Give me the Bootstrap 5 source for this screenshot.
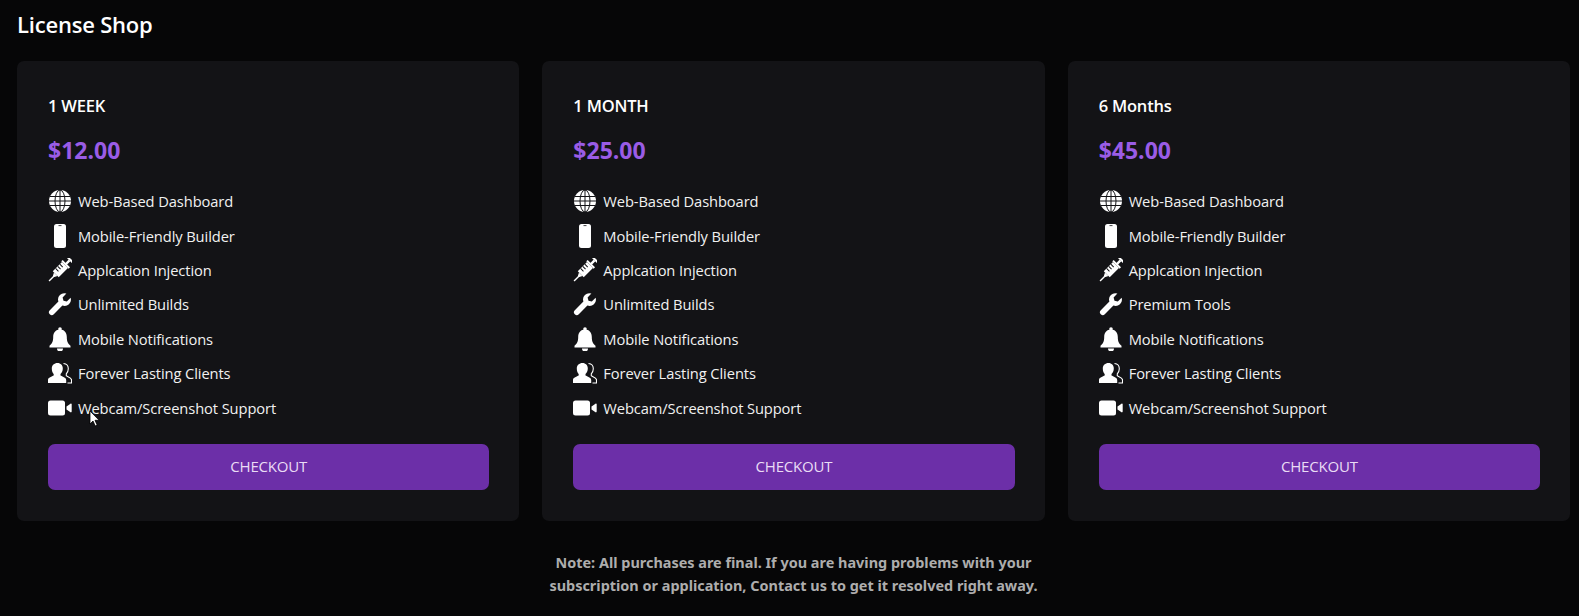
<!DOCTYPE html>
<html lang="en">
<head>
    <meta charset="UTF-8">
    <meta name="viewport" content="width=device-width, initial-scale=1.0">
    <title>License Shop</title>
    <link href="https://cdn.jsdelivr.net/npm/bootstrap@5.3.0/dist/css/bootstrap.min.css" rel="stylesheet">
    <style>
        body { background: #060607; color: #fff; font-family: "Open Sans", "Noto Sans", sans-serif; height: 616px; overflow: hidden; }
        .shop-page { padding: 10px 9px 0 17px; position: relative; }
        .shop-title { font-size: 22px; font-weight: 600; line-height: 29px; margin: 0 0 22px; letter-spacing: -.2px; }
        .plan-row { display: grid; grid-template-columns: repeat(3, 1fr); gap: 23px; }
        .plan-box { background: #131316; border: 0; border-radius: 7px; height: 460px; padding: 34px 30px 0 31px; color: #fff; }
        .plan-name { font-size: 16.5px; font-weight: 600; line-height: 22px; margin: 0 0 18px; letter-spacing: -.2px; }
        .plan-price { color: #9a5ce6; font-size: 23px; font-weight: 700; line-height: 30px; margin-bottom: 19px; }
        .feat-list { list-style: none; margin: 0; padding: 0; }
        .feat-list li { display: flex; align-items: center; gap: 6px; height: 34.4px; font-size: 14.7px; color: #f1f1f1; letter-spacing: -.1px; }
        .feat-ico { width: 24px; height: 24px; flex: none; fill: #fff; }
        .buy-btn { display: block; width: 100%; height: 46px; margin-top: 19px; background: #6c2fa8; border: 0; border-radius: 7px; color: #eadcf5; font-size: 15px; letter-spacing: -.2px; }
        .buy-btn:hover { background: #6c2fa8; color: #eadcf5; }
        .shop-note { width: 520px; margin: 30px auto 0; text-align: center; color: #adadad; font-family: "Noto Sans", sans-serif; font-size: 14.45px; font-weight: 700; line-height: 23px; }
        .mouse-arrow { position: absolute; left: 89px; top: 410px; width: 12px; height: 18px; }
    </style>
</head>
<body>
<svg class="d-none">
    <symbol id="i-globe" viewBox="0 0 24 24">
        <circle cx="12" cy="12" r="11" fill="#fff"/>
        <g fill="none" stroke="#131316" stroke-width="1">
            <ellipse cx="12" cy="12" rx="5" ry="11"/>
            <path d="M12 1v22M2 7.500h20M1 12h22M2 16.500h20"/>
        </g>
    </symbol>
    <symbol id="i-phone" viewBox="0 0 24 24">
        <path d="M8.500 0h7A2.500 2.500 0 0 1 18 2.500v19a2.500 2.500 0 0 1-2.500 2.500h-7A2.500 2.500 0 0 1 6 21.500v-19A2.500 2.500 0 0 1 8.500 0z"/>
        <path d="M10.500 1.600h3" stroke="#131316" stroke-width=".8"/>
    </symbol>
    <symbol id="i-syringe" viewBox="0 0 24 24">
        <g transform="rotate(45 12 12)">
            <rect x="8.500" y="-3.500" width="7" height="2.200"/>
            <rect x="10.800" y="-1.500" width="2.400" height="5"/>
            <rect x="6.800" y="3" width="10.400" height="2"/>
            <rect x="7.800" y="5" width="8.400" height="13"/>
            <path d="M9.500 18h5L13 21h-2z"/>
            <rect x="11.300" y="20" width="1.400" height="7.500"/>
            <path d="M7.800 8h4M7.800 11h4M7.800 14h4" stroke="#131316" stroke-width="1"/>
        </g>
    </symbol>
    <symbol id="i-wrench" viewBox="0 0 24 24">
        <path d="M22.600 5.800l-3.800 3.800-3.300-.9-.9-3.300 3.800-3.800a6.300 6.300 0 0 0-8 8L1.800 18.200a2.800 2.800 0 0 0 4 4l8.600-8.600a6.300 6.300 0 0 0 8.200-7.800z"/>
    </symbol>
    <symbol id="i-bell" viewBox="0 0 24 24">
        <circle cx="12" cy="2" r="1.800"/>
        <path d="M12 2.500c-4.400 0-6.800 3.200-6.800 7.500 0 5-1.500 7-3.700 8.700V20.500h21v-1.800C20.300 17 18.800 15 18.800 10c0-4.300-2.400-7.500-6.800-7.500z"/>
        <path d="M9 21.500a3 3 0 0 0 6 0z"/>
    </symbol>
    <symbol id="i-users" viewBox="0 0 24 24">
        <path d="M9.500 2c3.200 0 5.300 2.300 5.300 5.500 0 2.500-1 4.300-2.300 5.600v1.500c1.600.9 5.700 2 5.700 4.400V22H0v-3c0-2.400 4.100-3.500 5.700-4.400v-1.500C4.500 11.800 3.800 10 3.800 7.500 3.800 4.300 6.200 2 9.500 2z"/>
        <path d="M15.500 2.500c3 .2 4.800 2.400 4.800 5.300 0 2.200-.8 3.800-2 5v2c1.400.8 5.200 1.700 5.200 4V22h-4" fill="none" stroke="#fff" stroke-width="1.100"/>
    </symbol>
    <symbol id="i-video" viewBox="0 0 24 24">
        <rect x="0" y="4.500" width="17" height="15" rx="2.500"/>
        <path d="M18.500 10.500l4-2.800c.6-.3 1.200 0 1.200.7v7.200c0 .7-.6 1-1.200.7l-4-2.800z"/>
    </symbol>
</svg>

<div class="shop-page">
    <h1 class="shop-title">License Shop</h1>

    <div class="plan-row">
        <div class="card plan-box">
            <h2 class="plan-name">1 WEEK</h2>
            <div class="plan-price">$12.00</div>
            <ul class="feat-list">
                <li><svg class="feat-ico"><use href="#i-globe"/></svg>Web-Based Dashboard</li>
                <li><svg class="feat-ico"><use href="#i-phone"/></svg>Mobile-Friendly Builder</li>
                <li><svg class="feat-ico"><use href="#i-syringe"/></svg>Applcation Injection</li>
                <li><svg class="feat-ico"><use href="#i-wrench"/></svg>Unlimited Builds</li>
                <li><svg class="feat-ico"><use href="#i-bell"/></svg>Mobile Notifications</li>
                <li><svg class="feat-ico"><use href="#i-users"/></svg>Forever Lasting Clients</li>
                <li><svg class="feat-ico"><use href="#i-video"/></svg>Webcam/Screenshot Support</li>
            </ul>
            <button class="btn buy-btn" type="button">CHECKOUT</button>
        </div>

        <div class="card plan-box">
            <h2 class="plan-name">1 MONTH</h2>
            <div class="plan-price">$25.00</div>
            <ul class="feat-list">
                <li><svg class="feat-ico"><use href="#i-globe"/></svg>Web-Based Dashboard</li>
                <li><svg class="feat-ico"><use href="#i-phone"/></svg>Mobile-Friendly Builder</li>
                <li><svg class="feat-ico"><use href="#i-syringe"/></svg>Applcation Injection</li>
                <li><svg class="feat-ico"><use href="#i-wrench"/></svg>Unlimited Builds</li>
                <li><svg class="feat-ico"><use href="#i-bell"/></svg>Mobile Notifications</li>
                <li><svg class="feat-ico"><use href="#i-users"/></svg>Forever Lasting Clients</li>
                <li><svg class="feat-ico"><use href="#i-video"/></svg>Webcam/Screenshot Support</li>
            </ul>
            <button class="btn buy-btn" type="button">CHECKOUT</button>
        </div>

        <div class="card plan-box">
            <h2 class="plan-name">6 Months</h2>
            <div class="plan-price">$45.00</div>
            <ul class="feat-list">
                <li><svg class="feat-ico"><use href="#i-globe"/></svg>Web-Based Dashboard</li>
                <li><svg class="feat-ico"><use href="#i-phone"/></svg>Mobile-Friendly Builder</li>
                <li><svg class="feat-ico"><use href="#i-syringe"/></svg>Applcation Injection</li>
                <li><svg class="feat-ico"><use href="#i-wrench"/></svg>Premium Tools</li>
                <li><svg class="feat-ico"><use href="#i-bell"/></svg>Mobile Notifications</li>
                <li><svg class="feat-ico"><use href="#i-users"/></svg>Forever Lasting Clients</li>
                <li><svg class="feat-ico"><use href="#i-video"/></svg>Webcam/Screenshot Support</li>
            </ul>
            <button class="btn buy-btn" type="button">CHECKOUT</button>
        </div>
    </div>

    <p class="shop-note">Note: All purchases are final. If you are having problems with your subscription or application, Contact us to get it resolved right away.</p>

    <svg class="mouse-arrow" viewBox="0 0 12 18"><path d="M1 1v13l3-3 2.200 5 2-.9L6 10.300h4.200z" fill="#fff" stroke="#000" stroke-width=".8"/></svg>
</div>
</body>
</html>
